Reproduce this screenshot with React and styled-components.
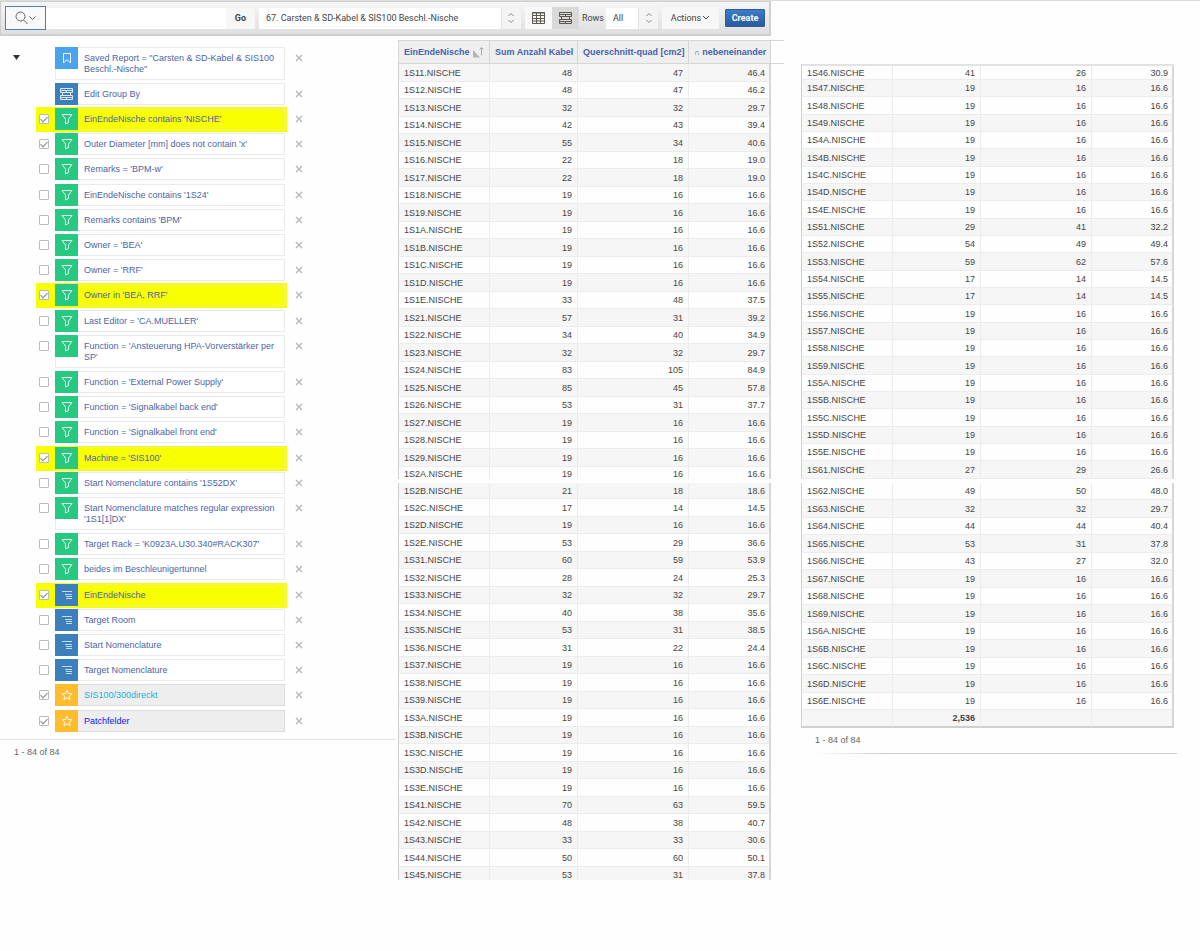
import React from 'react';
import { useState } from 'react';
import styled, { createGlobalStyle, css } from 'styled-components'


const reports = [
  '67. Carsten & SD-Kabel & SIS100 Beschl.-Nische',
]

const settings = [
  { type: 'report', label: 'Saved Report = "Carsten & SD-Kabel & SIS100 Beschl.-Nische"' },
  { type: 'group', label: 'Edit Group By' },
  { type: 'filter', label: "EinEndeNische contains 'NISCHE'", on: true, marked: true },
  { type: 'filter', label: "Outer Diameter [mm] does not contain 'x'", on: true },
  { type: 'filter', label: "Remarks = 'BPM-w'" },
  { type: 'filter', label: "EinEndeNische contains '1S24'" },
  { type: 'filter', label: "Remarks contains 'BPM'" },
  { type: 'filter', label: "Owner = 'BEA'" },
  { type: 'filter', label: "Owner = 'RRF'" },
  { type: 'filter', label: "Owner in 'BEA, RRF'", on: true, marked: true },
  { type: 'filter', label: "Last Editor = 'CA.MUELLER'" },
  { type: 'filter', label: "Function = 'Ansteuerung HPA-Vorverstärker per SP'" },
  { type: 'filter', label: "Function = 'External Power Supply'" },
  { type: 'filter', label: "Function = 'Signalkabel back end'" },
  { type: 'filter', label: "Function = 'Signalkabel front end'" },
  { type: 'filter', label: "Machine = 'SIS100'", on: true, marked: true },
  { type: 'filter', label: "Start Nomenclature contains '1S52DX'" },
  { type: 'filter', label: "Start Nomenclature matches regular expression '1S1[1]DX'" },
  { type: 'filter', label: "Target Rack = 'K0923A.U30.340#RACK307'" },
  { type: 'filter', label: 'beides im Beschleunigertunnel' },
  { type: 'break', label: 'EinEndeNische', on: true, marked: true },
  { type: 'break', label: 'Target Room' },
  { type: 'break', label: 'Start Nomenclature' },
  { type: 'break', label: 'Target Nomenclature' },
  { type: 'highlight', label: 'SIS100/300direckt', on: true, color: '#16b4d8' },
  { type: 'highlight', label: 'Patchfelder', on: true, color: '#1414ff' },
]

const iconColors = {
  report: '#4aa3ee',
  group: '#3b80bd',
  filter: '#26c97f',
  break: '#3b80bd',
  highlight: '#ffbc2c',
}

// niche, cables, cross section, side by side
const firstRows = [
  ['1S11', 48, 47, '46.4'], ['1S12', 48, 47, '46.2'], ['1S13', 32, 32, '29.7'],
  ['1S14', 42, 43, '39.4'], ['1S15', 55, 34, '40.6'], ['1S16', 22, 18, '19.0'],
  ['1S17', 22, 18, '19.0'], ['1S18', 19, 16, '16.6'], ['1S19', 19, 16, '16.6'],
  ['1S1A', 19, 16, '16.6'], ['1S1B', 19, 16, '16.6'], ['1S1C', 19, 16, '16.6'],
  ['1S1D', 19, 16, '16.6'], ['1S1E', 33, 48, '37.5'], ['1S21', 57, 31, '39.2'],
  ['1S22', 34, 40, '34.9'], ['1S23', 32, 32, '29.7'], ['1S24', 83, 105, '84.9'],
  ['1S25', 85, 45, '57.8'], ['1S26', 53, 31, '37.7'], ['1S27', 19, 16, '16.6'],
  ['1S28', 19, 16, '16.6'], ['1S29', 19, 16, '16.6'], ['1S2A', 19, 16, '16.6'],
]

const secondRows = [
  ['1S2B', 21, 18, '18.6'], ['1S2C', 17, 14, '14.5'], ['1S2D', 19, 16, '16.6'],
  ['1S2E', 53, 29, '36.6'], ['1S31', 60, 59, '53.9'], ['1S32', 28, 24, '25.3'],
  ['1S33', 32, 32, '29.7'], ['1S34', 40, 38, '35.6'], ['1S35', 53, 31, '38.5'],
  ['1S36', 31, 22, '24.4'], ['1S37', 19, 16, '16.6'], ['1S38', 19, 16, '16.6'],
  ['1S39', 19, 16, '16.6'], ['1S3A', 19, 16, '16.6'], ['1S3B', 19, 16, '16.6'],
  ['1S3C', 19, 16, '16.6'], ['1S3D', 19, 16, '16.6'], ['1S3E', 19, 16, '16.6'],
  ['1S41', 70, 63, '59.5'], ['1S42', 48, 38, '40.7'], ['1S43', 33, 33, '30.6'],
  ['1S44', 50, 60, '50.1'], ['1S45', 53, 31, '37.8'],
]

const thirdRows = [
  ['1S46', 41, 26, '30.9'], ['1S47', 19, 16, '16.6'], ['1S48', 19, 16, '16.6'],
  ['1S49', 19, 16, '16.6'], ['1S4A', 19, 16, '16.6'], ['1S4B', 19, 16, '16.6'],
  ['1S4C', 19, 16, '16.6'], ['1S4D', 19, 16, '16.6'], ['1S4E', 19, 16, '16.6'],
  ['1S51', 29, 41, '32.2'], ['1S52', 54, 49, '49.4'], ['1S53', 59, 62, '57.6'],
  ['1S54', 17, 14, '14.5'], ['1S55', 17, 14, '14.5'], ['1S56', 19, 16, '16.6'],
  ['1S57', 19, 16, '16.6'], ['1S58', 19, 16, '16.6'], ['1S59', 19, 16, '16.6'],
  ['1S5A', 19, 16, '16.6'], ['1S5B', 19, 16, '16.6'], ['1S5C', 19, 16, '16.6'],
  ['1S5D', 19, 16, '16.6'], ['1S5E', 19, 16, '16.6'], ['1S61', 27, 29, '26.6'],
]

const lastRows = [
  ['1S62', 49, 50, '48.0'], ['1S63', 32, 32, '29.7'], ['1S64', 44, 44, '40.4'],
  ['1S65', 53, 31, '37.8'], ['1S66', 43, 27, '32.0'], ['1S67', 19, 16, '16.6'],
  ['1S68', 19, 16, '16.6'], ['1S69', 19, 16, '16.6'], ['1S6A', 19, 16, '16.6'],
  ['1S6B', 19, 16, '16.6'], ['1S6C', 19, 16, '16.6'], ['1S6D', 19, 16, '16.6'],
  ['1S6E', 19, 16, '16.6'],
]

function Setting_icon({ type }) {
  if (type === 'report') {
    return (
      <svg width="12" height="14" viewBox="0 0 12 14" fill="none" stroke="#fff">
        <path d="M2.500 2.500h7v9.500L6 8.500l-3.500 3.500z" />
      </svg>
    )
  }
  if (type === 'group') {
    return (
      <svg width="13" height="12" viewBox="0 0 13 12" fill="none" stroke="#dbe9f5">
        <path d="M.5.5h12v4H.5zM.5 7.500h12v4H.5zM.5 2.500h12M.5 9.500h12M2.500 4.500v3M10.500 4.500v3M6.500 2.500v2M6.500 9.500v2" />
      </svg>
    )
  }
  if (type === 'break') {
    return (
      <svg width="12" height="12" viewBox="0 0 12 12" fill="none" stroke="#c3dcf0">
        <path d="M1 2.500h10M4 5.500h7M5 7.500h6M5 9.500h6" />
      </svg>
    )
  }
  if (type === 'highlight') {
    return (
      <svg width="12" height="12" viewBox="0 0 12 12" fill="none" stroke="#fff">
        <path d="M6 1.200l1.400 3.200 3.500.4-2.600 2.300.8 3.500L6 8.800l-3.100 1.800.8-3.500L1.100 4.800l3.500-.4z" />
      </svg>
    )
  }
  return (
    <svg width="12" height="12" viewBox="0 0 12 12" fill="none" stroke="#e9fff5">
      <path d="M1 1.500h10L7.500 6v3.500l-3 1.500V6z" />
    </svg>
  )
}

function Updown() {
  return (
    <Arrows aria-hidden="true">
      <svg width="8" height="12" viewBox="0 0 8 12" fill="none" stroke="#8a8a8a">
        <path d="M1.500 4L4 1.500 6.500 4M1.500 8L4 10.500 6.500 8" />
      </svg>
    </Arrows>
  )
}

function Rows({ rows }) {
  return rows.map(([name, cables, area, beside]) =>
    <tr key={name}>
      <td>{name}.NISCHE</td>
      <td>{cables}</td>
      <td>{area}</td>
      <td>{beside}</td>
    </tr>
  )
}

function Columns() {
  return (
    <colgroup>
      <Col $w={92} />
      <Col $w={88} />
      <Col $w={111} />
      <Col $w={82} />
      <Col $w={13} />
    </colgroup>
  )
}

function Toolbar() {
  const [view, setView] = useState('group')
  const [search, setSearch] = useState('')

  return (
    <Bar>
      <Search_button aria-label="Select columns to search">
        <svg width="22" height="14" viewBox="0 0 22 14" fill="none" stroke="#666">
          <circle cx="5.500" cy="5.500" r="4.500" />
          <path d="M8.500 9l4 4M14.500 5.500l3 3 3-3" />
        </svg>
      </Search_button>
      <Search_input aria-label="Search" value={search} onChange={(e) => setSearch(e.target.value)} />
      <Go_button>Go</Go_button>
      <Report_select>
        <select aria-label="Reports">
          {reports.map((report) => <option key={report}>{report}</option>)}
        </select>
        <Updown />
      </Report_select>
      <Views>
        <View_button aria-label="View report" className={view === 'report' ? 'active' : ''} onClick={() => setView('report')}>
          <svg width="13" height="12" viewBox="0 0 13 12" fill="none" stroke="#5c5852">
            <path d="M.5 1h12M.5.5h12v11H.5zM.5 3.500h12M.5 6.500h12M.5 9h12M4.500.5v11M8.500.5v11" />
          </svg>
        </View_button>
        <View_button aria-label="View group by" className={view === 'group' ? 'active' : ''} onClick={() => setView('group')}>
          <svg width="13" height="12" viewBox="0 0 13 12" fill="none" stroke="#5c5852">
            <path d="M.5.5h12v4H.5zM.5 7.500h12v4H.5zM.5 2.500h12M.5 9.500h12M2.500 4.500v3M10.500 4.500v3M6.500 2.500v2M6.500 9.500v2" />
          </svg>
        </View_button>
      </Views>
      <Rows_label htmlFor="rows">Rows</Rows_label>
      <Rows_select>
        <select id="rows">
          <option>All</option>
        </select>
        <Updown />
      </Rows_select>
      <Actions_button>
        Actions
        <svg width="8" height="6" viewBox="0 0 8 6" fill="none" stroke="#444">
          <path d="M1 1l3 3 3-3" />
        </svg>
      </Actions_button>
      <Create_button>Create</Create_button>
    </Bar>
  )
}

function Settings() {
  const [checked, setChecked] = useState(settings.map((item) => !!item.on))

  const toggle = (index) => {
    setChecked(checked.map((value, i) => i === index ? !value : value))
  }

  return (
    <Sidebar>
      <Setting_area>
        <Collapse aria-label="Report settings">
          <svg width="7" height="5" viewBox="0 0 7 5" fill="#333"><path d="M0 0h7L3.500 5z" /></svg>
        </Collapse>
        <List>
          {settings.map((item, index) =>
            <Item key={item.label}>
              <Mark $on={item.marked}>
                {item.type === 'report' || item.type === 'group'
                  ? <No_check />
                  : <Check type="checkbox" aria-label={item.label} checked={checked[index]} onChange={() => toggle(index)} />}
                <Chip $shaded={item.type === 'highlight'} $marked={item.marked}>
                  <Icon_box $color={iconColors[item.type]}><Setting_icon type={item.type} /></Icon_box>
                  <Chip_link href="#" $color={item.color}>{item.label}</Chip_link>
                </Chip>
              </Mark>
              <Remove aria-label={'Remove ' + item.label}>
                <svg width="8" height="8" viewBox="0 0 8 8" stroke="#b8b8b8" strokeWidth="1.400"><path d="M1 1l6 6M7 1L1 7" /></svg>
              </Remove>
            </Item>
          )}
        </List>
      </Setting_area>
      <Count>1 - 84 of 84</Count>
    </Sidebar>
  )
}

function App() {
  return (
    <Page>
      <Global />
      <Left>
        <Toolbar />
        <Report>
          <Settings />
          <Table>
            <Columns />
            <thead>
              <tr>
                <Head>
                  EinEndeNische
                  <svg width="11" height="12" viewBox="0 0 11 12" fill="none" stroke="#a8a8a8">
                    <path d="M8.500 9.500V1.500M6.500 3.500l2-2 2 2" />
                    <path d="M0 4l7 7.500H0z" fill="#b4b4b4" stroke="none" />
                  </svg>
                </Head>
                <Head>Sum Anzahl Kabel</Head>
                <Head>Querschnitt-quad [cm2]</Head>
                <Head><small>∩</small> nebeneinander</Head>
                <Head_tail />
              </tr>
            </thead>
            <Body $stripe="odd" $tall="2n+1" $lastHeight={12}>
              <Rows rows={firstRows} />
            </Body>
            <Body $stripe="odd" $tall="2n" $gap={4} $firstHeight={16} $lastHeight={13}>
              <Rows rows={secondRows} />
            </Body>
          </Table>
        </Report>
      </Left>
      <Right>
        <Table>
          <Columns />
          <thead>
            <tr>
              <Head_edge />
              <Head_edge />
              <Head_edge />
              <Head_edge />
              <td />
            </tr>
          </thead>
          <Body $stripe="even" $tall="3n" $firstHeight={14}>
            <Rows rows={thirdRows} />
          </Body>
          <Body $stripe="even" $tall="2n" $gap={4}>
            <Rows rows={lastRows} />
          </Body>
          <Foot>
            <tr>
              <td />
              <td>2,536</td>
              <td />
              <td />
            </tr>
          </Foot>
        </Table>
        <Count_end>1 - 84 of 84</Count_end>
      </Right>
    </Page>
  )
}

export default App;

const Global = createGlobalStyle`
*{
  box-sizing:border-box;
}
body{
  margin:0;
  background:#fefefe;
  font-family:"Liberation Sans", Arial, sans-serif;
  font-size:9px;
  line-height:11px;
  color:#444;
}
button, input, select{
  font-family:Roboto, "Noto Sans", sans-serif;
  font-size:9px;
  color:#444;
  margin:0;
  padding:0;
  border:0;
}
`

const Page = styled.div`
display:grid;
grid-template-columns:minmax(0, 784fr) minmax(0, 416fr);
border-top:1px solid #dcdcdc;
`

const Left = styled.div``

const Bar = styled.div`
display:flex;
align-items:center;
height:35px;
margin-right:13px;
padding:0 4px;
border:solid #cfcfcf;
border-width:1px 2px 2px 1px;
background:linear-gradient(#f6f6f6, #dfdfdf);
font-family:Roboto, "Noto Sans", sans-serif;
`

const Search_button = styled.button`
display:flex;
align-items:center;
justify-content:center;
width:41px;
height:24px;
background:#f9f9f9;
border:1px solid #4a7fc1;
`
const Search_input = styled.input`
flex:1;
min-width:0;
height:21px;
background:#fff;
`
const Go_button = styled.button`
width:29px;
height:21px;
margin-right:4px;
background:#f7f7f7;
font-weight:700;
`

const selectBox = css`
display:flex;
height:21px;
background:#fff;
select{
  flex:1;
  min-width:0;
  appearance:none;
  background:none;
  padding:0 7px;
}
`
const Report_select = styled.div`
${selectBox}
width:262px;
margin-right:4px;
`
const Rows_select = styled.div`
${selectBox}
width:52px;
margin-right:4px;
`
const Arrows = styled.span`
display:flex;
align-items:center;
justify-content:center;
width:20px;
background:#f4f4f4;
border-left:1px solid #e2e2e2;
`

const Views = styled.div`
display:flex;
margin-right:3px;
`
const View_button = styled.button`
display:flex;
align-items:center;
justify-content:center;
width:27px;
height:22px;
background:#f9f9f9;
&.active{
  background:#d9d9d9;
}
`
const Rows_label = styled.label`
margin-right:2px;
`
const Actions_button = styled.button`
display:flex;
align-items:center;
justify-content:center;
gap:1px;
width:57px;
height:22px;
margin-right:6px;
background:#f7f7f7;
`
const Create_button = styled.button`
width:40px;
height:18px;
color:#fff;
font-weight:700;
background:linear-gradient(#3f7cc8, #2859a0);
border:1px solid #2c5c9f;
border-radius:1px;
`

const Report = styled.div`
display:grid;
grid-template-columns:minmax(0, 398fr) minmax(0, 386fr);
align-items:start;
padding-top:4px;
`

const Sidebar = styled.div`
padding-top:6px;
`
const Setting_area = styled.div`
display:flex;
align-items:flex-start;
margin-right:2px;
padding-bottom:5px;
border-bottom:1px solid #e4e4e4;
`
const Collapse = styled.button`
display:flex;
width:7px;
margin:9px 16px 0 13px;
background:none;
`
const List = styled.ul`
flex:1;
margin:0;
padding:0;
list-style:none;
`
const Item = styled.li`
display:flex;
align-items:flex-start;
&:nth-child(5n){
  padding-bottom:1px;
}
`
const Mark = styled.div`
display:flex;
align-items:flex-start;
width:251px;
padding:1px 2px 2px 3px;
background:${props => props.$on ? '#f7ff00' : 'none'};
`
const Check = styled.input`
appearance:none;
display:grid;
justify-content:center;
width:10px;
height:10px;
margin:6px 6px 0 0;
background:#fff;
border:1px solid #bcbcbc;
border-radius:1px;
&:checked::after{
  content:'';
  width:3px;
  height:6px;
  border:solid #8a8a8a;
  border-width:0 1px 1px 0;
  transform:rotate(45deg);
}
`
const No_check = styled.span`
width:16px;
`
const Chip = styled.div`
display:flex;
align-items:flex-start;
flex:1;
min-height:22px;
background:${props => props.$marked ? 'none' : props.$shaded ? '#eee' : '#fff'};
box-shadow:inset 0 0 0 1px ${props => props.$marked ? '#f1f46a' : props.$shaded ? '#dcdcdc' : '#ebebeb'};
`
const Icon_box = styled.span`
display:flex;
align-items:center;
justify-content:center;
width:23px;
height:22px;
background:${props => props.$color};
`
const Chip_link = styled.a`
flex:1;
padding:6px 6px 5px;
color:${props => props.$color || '#4c64a8'};
text-decoration:none;
`
const Remove = styled.button`
display:flex;
margin:8px 0 0 8px;
background:none;
`
const Count = styled.p`
margin:0;
padding:7px 14px;
color:#666;
`

const Table = styled.table`
width:100%;
table-layout:fixed;
border-collapse:separate;
border-spacing:0;
line-height:10px;
td:nth-child(n+2){
  text-align:right;
}
`
const Col = styled.col`
width:${props => props.$w}px;
`
const Head = styled.th`
height:24px;
padding:0 5px;
white-space:nowrap;
text-align:right;
color:#4663ac;
background:#efefef;
border:solid #d6d6d6;
border-width:1px 1px 1px 0;
&:first-child{
  text-align:left;
  padding-right:0;
  border-left-width:1px;
}
svg{
  margin-left:3px;
  vertical-align:-3px;
}
small{
  font-size:8px;
  font-weight:400;
}
`
const Head_tail = styled.td`
border:solid #d6d6d6;
border-width:1px 0;
`
const Head_edge = styled.th`
height:2px;
padding:0;
background:#e2e2e2;
`
const cells = css`
td{
  height:17px;
  padding:0 5px;
  border:solid #ececec;
  border-width:0 1px 1px 0;
}
td:first-child{
  border-left:1px solid #cfcfcf;
}
td:nth-child(4){
  padding-right:4px;
  border-right:2px solid #d6d6d6;
}
`
const Body = styled.tbody`
${cells}
tr:nth-child(${props => props.$stripe}) td{
  background:#f6f6f6;
}
tr:nth-child(${props => props.$tall}) td{
  height:18px;
}
tr:first-child td{
  ${props => props.$firstHeight && `height:${props.$firstHeight}px;`}
}
tr:last-child td{
  ${props => props.$lastHeight && `height:${props.$lastHeight}px; vertical-align:bottom; border-bottom:0;`}
}
${props => props.$gap && `
&::before{
  content:'';
  display:table-row;
  height:${props.$gap}px;
}
`}
`
const Foot = styled.tfoot`
${cells}
td{
  height:18px;
  font-weight:700;
  background:#f6f6f6;
  border-bottom:2px solid #cfcfcf;
}
`

const Right = styled.div`
padding:63px 13px 0 17px;
`
const Count_end = styled.p`
margin:0 10px 0 14px;
padding:7px 0;
color:#666;
border-bottom:1px solid #ccc;
border-image:linear-gradient(to right, transparent, #ccc 20%) 1;
`
